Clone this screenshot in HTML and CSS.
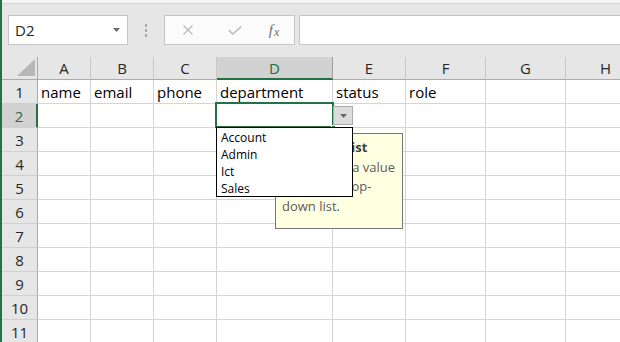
FILE: index.html
```html
<!DOCTYPE html>
<html lang="en">
<head>
    <meta charset="UTF-8">
    <meta name="viewport" content="width=device-width, initial-scale=1.0">
    <title>Sheet1 - Excel</title>
    <link rel="stylesheet" href="styles.css">
</head>
<body>
    <div class="app">
        <div class="top-strip"></div>

        <div class="formula-row">
            <div class="name-box">
                <span>D2</span>
                <svg width="7" height="4" viewBox="0 0 7 4"><polygon points="0,0 7,0 3.5,4" fill="#6b6b6b"/></svg>
            </div>
            <div class="grip"><i></i><i></i><i></i></div>
            <div class="formula-buttons">
                <span class="fbtn">
                    <svg width="12" height="10" viewBox="0 0 12 10"><path d="M1.5 0.5 L10.5 9.5 M10.5 0.5 L1.5 9.5" stroke="#b8b8b8" stroke-width="1.3" fill="none"/></svg>
                </span>
                <span class="fbtn">
                    <svg width="14" height="9" viewBox="0 0 14 9"><path d="M0.8 4.2 L4.8 8 L13.2 0.6" stroke="#bdbdbd" stroke-width="1.6" fill="none"/></svg>
                </span>
                <span class="fbtn fx">f<span>x</span></span>
            </div>
            <div class="formula-bar"></div>
        </div>

        <div class="sheet">
            <div class="row head">
                <div class="rh corner">
                    <svg width="18" height="17" viewBox="0 0 18 17"><polygon points="18,0 18,17 0,17" fill="#b7b7b7"/></svg>
                </div>
                <div class="a">A</div><div class="b">B</div><div class="c">C</div>
                <div class="d sel">D</div><div class="e">E</div><div class="f">F</div>
                <div class="g">G</div><div class="h">H</div>
            </div>
            <div class="row">
                <div class="rh">1</div>
                <div class="a">name</div><div class="b">email</div><div class="c">phone</div>
                <div class="d">department</div><div class="e">status</div><div class="f">role</div>
                <div class="g"></div><div class="h"></div>
            </div>
            <div class="row">
                <div class="rh sel">2</div>
                <div class="a"></div><div class="b"></div><div class="c"></div><div class="d"></div>
                <div class="e"></div><div class="f"></div><div class="g"></div><div class="h"></div>
            </div>
            <div class="row">
                <div class="rh">3</div>
                <div class="a"></div><div class="b"></div><div class="c"></div><div class="d"></div>
                <div class="e"></div><div class="f"></div><div class="g"></div><div class="h"></div>
            </div>
            <div class="row">
                <div class="rh">4</div>
                <div class="a"></div><div class="b"></div><div class="c"></div><div class="d"></div>
                <div class="e"></div><div class="f"></div><div class="g"></div><div class="h"></div>
            </div>
            <div class="row">
                <div class="rh">5</div>
                <div class="a"></div><div class="b"></div><div class="c"></div><div class="d"></div>
                <div class="e"></div><div class="f"></div><div class="g"></div><div class="h"></div>
            </div>
            <div class="row">
                <div class="rh">6</div>
                <div class="a"></div><div class="b"></div><div class="c"></div><div class="d"></div>
                <div class="e"></div><div class="f"></div><div class="g"></div><div class="h"></div>
            </div>
            <div class="row">
                <div class="rh">7</div>
                <div class="a"></div><div class="b"></div><div class="c"></div><div class="d"></div>
                <div class="e"></div><div class="f"></div><div class="g"></div><div class="h"></div>
            </div>
            <div class="row">
                <div class="rh">8</div>
                <div class="a"></div><div class="b"></div><div class="c"></div><div class="d"></div>
                <div class="e"></div><div class="f"></div><div class="g"></div><div class="h"></div>
            </div>
            <div class="row">
                <div class="rh">9</div>
                <div class="a"></div><div class="b"></div><div class="c"></div><div class="d"></div>
                <div class="e"></div><div class="f"></div><div class="g"></div><div class="h"></div>
            </div>
            <div class="row">
                <div class="rh">10</div>
                <div class="a"></div><div class="b"></div><div class="c"></div><div class="d"></div>
                <div class="e"></div><div class="f"></div><div class="g"></div><div class="h"></div>
            </div>
            <div class="row">
                <div class="rh">11</div>
                <div class="a"></div><div class="b"></div><div class="c"></div><div class="d"></div>
                <div class="e"></div><div class="f"></div><div class="g"></div><div class="h"></div>
            </div>

            <!-- active cell D2 with its validation list -->
            <div class="active-cell"><span class="fill-handle"></span></div>
            <div class="input-message">
                <b>Pick from list</b>
                <p>Please pick a value from the drop-down list.</p>
            </div>
            <button class="list-button">
                <svg width="7" height="4" viewBox="0 0 7 4"><polygon points="0,0 7,0 3.5,4" fill="#666"/></svg>
            </button>
            <ul class="list-box">
                <li>Account</li>
                <li>Admin</li>
                <li>Ict</li>
                <li>Sales</li>
            </ul>
        </div>
    </div>
</body>
</html>
```

FILE: styles.css
```css
* {
    box-sizing: border-box;
}

body {
    margin: 0;
    width: 620px;
    height: 342px;
    overflow: hidden;
    font-family: "Open Sans", sans-serif;
    background-color: #e6e6e6;
    color: #000;
}

.app {
    height: 342px;
    border-left: 2px solid #217346;
    overflow: hidden;
}

.top-strip {
    height: 4px;
    background-color: #f3f3f3;
    border-bottom: 1px solid #d4d4d4;
}

.formula-row {
    display: flex;
    height: 53px;
    padding-top: 11px;
}

.name-box {
    display: flex;
    align-items: center;
    justify-content: space-between;
    width: 120px;
    height: 30px;
    margin-left: 6px;
    padding: 0 7px 0 6px;
    background-color: #fff;
    border: 1px solid #c6c6c6;
    font-size: 15px;
    line-height: 28px;
    color: #262626;
}

.grip {
    display: flex;
    flex-direction: column;
    align-items: center;
    justify-content: center;
    gap: 2px;
    width: 36px;
    height: 30px;
}

.grip i {
    display: block;
    width: 2px;
    height: 3px;
    background-color: #a8a8a8;
}

.formula-buttons {
    display: grid;
    grid-template-columns: 46px 48px 30px;
    align-items: center;
    width: 131px;
    height: 30px;
    background-color: #fbfbfb;
    border: 1px solid #c6c6c6;
}

.fbtn {
    display: flex;
    justify-content: center;
    align-items: center;
}

.fx {
    font-family: "Liberation Serif", serif;
    font-style: italic;
    font-size: 15px;
    color: #707070;
    line-height: 1;
    padding-top: 1px;
}

.fx span {
    font-size: 12px;
    margin-left: 1px;
    padding-top: 3px;
}

.formula-bar {
    flex: 1;
    height: 30px;
    margin-left: 4px;
    background-color: #fff;
    border: 1px solid #c6c6c6;
    border-right: none;
}

/* grid */

.sheet {
    position: relative;
    background-color: #fff;
}

.row {
    display: flex;
    height: 24px;
}

.row > div {
    flex: none;
    height: 100%;
    padding-left: 3px;
    border-right: 1px solid #d4d4d4;
    border-bottom: 1px solid #d4d4d4;
    font-size: 15px;
    line-height: 24px;
    white-space: nowrap;
    overflow: hidden;
}

.row .a { width: 53px; }
.row .b { width: 63px; }
.row .c { width: 63px; }
.row .d { width: 116px; }
.row .e { width: 73px; }
.row .f { width: 80px; }
.row .g { width: 80px; }
.row .h { width: 80px; }

.row .rh {
    width: 36px;
    padding-left: 0;
    text-align: center;
    background-color: #e6e6e6;
    border-right-color: #ababab;
    border-bottom-color: #d0d0d0;
    color: #262626;
}

.row .rh.sel {
    background-color: #d2d2d2;
    border-right: 2px solid #217346;
    color: #1f6b43;
}

.row.head {
    height: 23px;
}

.row.head > div {
    padding-left: 0;
    text-align: center;
    line-height: 22px;
    background-color: #e6e6e6;
    border-right-color: #c8c8c8;
    border-bottom-color: #ababab;
    color: #262626;
}

.row.head .corner {
    display: flex;
    justify-content: flex-end;
    align-items: flex-end;
    padding: 0 2px 3px 0;
    border-right-color: #ababab;
}

.row.head .corner svg {
    display: block;
}

.row.head .sel {
    background-color: #d2d2d2;
    border-right-color: #9e9e9e;
    border-bottom: 2px solid #217346;
    color: #1f6b43;
}

/* overlays on cell D2 */

.active-cell {
    position: absolute;
    left: 213px;
    top: 45px;
    width: 119px;
    height: 26px;
    border: 2px solid #217346;
}

.fill-handle {
    position: absolute;
    right: -4px;
    bottom: -4px;
    width: 5px;
    height: 5px;
    background-color: #217346;
    border: 1px solid #fff;
}

.list-button {
    position: absolute;
    left: 331px;
    top: 49px;
    width: 20px;
    height: 19px;
    padding: 0;
    display: flex;
    align-items: center;
    justify-content: center;
    background-color: #dcdcdc;
    border: 1px solid #ababab;
}

.list-box {
    position: absolute;
    left: 214px;
    top: 70px;
    width: 137px;
    height: 70px;
    margin: 0;
    padding: 1px 0 0 4px;
    list-style: none;
    background-color: #fff;
    border: 1px solid #000;
    font-size: 12px;
    line-height: 17px;
    color: #000;
}

.input-message {
    position: absolute;
    left: 273px;
    top: 76px;
    width: 128px;
    height: 96px;
    padding: 4px 1px 0 6px;
    background-color: #ffffe1;
    border: 1px solid #767676;
    font-size: 13px;
    line-height: 19.5px;
    color: #5c5c5c;
}

.input-message b {
    display: block;
    color: #3f3f3f;
}

.input-message p {
    margin: 0;
}
```
